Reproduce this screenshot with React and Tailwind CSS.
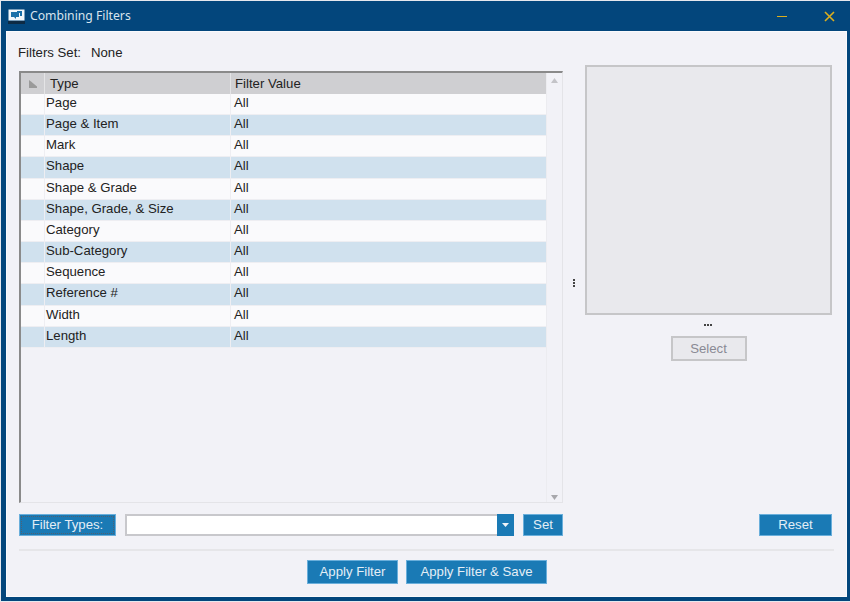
const rows = [
  "Page",
  "Page & Item",
  "Mark",
  "Shape",
  "Shape & Grade",
  "Shape, Grade, & Size",
  "Category",
  "Sub-Category",
  "Sequence",
  "Reference #",
  "Width",
  "Length",
];

function BlueButton({ className = "", children }) {
  return (
    <button className={`h-full bg-[#1a7ab5] border border-[#6aafdb] text-[#e4eef5] text-[13.2px] leading-none ${className}`}>
      {children}
    </button>
  );
}

function Dots({ vertical }) {
  return (
    <div className={`flex gap-[1px] ${vertical ? "flex-col" : ""}`}>
      <span className="w-[2px] h-[2px] bg-[#444]" />
      <span className="w-[2px] h-[2px] bg-[#444]" />
      <span className="w-[2px] h-[2px] bg-[#444]" />
    </div>
  );
}

function FilterTable() {
  return (
    <div className="w-[544px] h-[432px] shrink-0 flex border-t-2 border-l-2 border-t-[#8a8a8a] border-l-[#8a8a8a] border-b border-r border-b-[#e4e4e8] border-r-[#e4e4e8]">
      <div className="w-[525px] flex flex-col">
        <div className="h-[21px] flex bg-[#cfcfd2] text-[#222] text-[13.2px] leading-[21px]">
          <div className="w-[24px] border-r border-[#e4e4e6] flex items-center justify-center">
            <svg width="9" height="8" viewBox="0 0 9 8">
              <path d="M1 0v8h8V6.5L3 1.5z" fill="#9a9a9a" />
            </svg>
          </div>
          <div className="w-[186px] pl-[5px] border-r border-[#e4e4e6]">Type</div>
          <div className="flex-1 pl-[4px]">Filter Value</div>
        </div>
        <div className="h-[254px] grid auto-rows-fr">
          {rows.map((name, i) => (
            <div
              key={name}
              className={`flex border-b border-[#eeeef2] text-[13.2px] leading-[16px] text-[#222] ${i % 2 === 0 ? "bg-[#fafafc]" : "bg-[#d0e1ee]"}`}
            >
              <div className="w-[24px] border-r border-[#eeeef2]" />
              <div className="w-[186px] pl-[1px] pt-[1px] border-r border-[#eeeef2]">{name}</div>
              <div className="flex-1 pl-[3px] pt-[1px]">All</div>
            </div>
          ))}
        </div>
      </div>
      <div className="flex-1 flex flex-col items-center justify-between pt-[5px] pb-[2px] border-l border-[#ececf0]">
        <svg width="7" height="5" viewBox="0 0 7 5"><path d="M3.5 0 7 5H0z" fill="#c4c4c8" /></svg>
        <svg width="7" height="5" viewBox="0 0 7 5"><path d="M0 0h7L3.5 5z" fill="#a8a8ac" /></svg>
      </div>
    </div>
  );
}

export default function App() {
  return (
    <div
      className="w-[850px] h-[602px] flex bg-[#e6e8ee] pt-[1px] pl-[1px] pb-[1px]"
      style={{ fontFamily: "'Liberation Sans', Arial, sans-serif" }}
    >
      <div className="flex-1 flex flex-col bg-[#03467c] pr-[3px] pb-[4px]">
        <div className="h-[30px] flex items-center shrink-0 pl-[7px]">
          <svg width="17" height="15" viewBox="0 0 17 15" className="mr-[5px]">
            <rect x="0.5" y="0.5" width="16" height="11" fill="#f2f6fa" />
            <rect x="0" y="12" width="17" height="3" fill="#0d2a44" />
            <path d="M3 3h8v5H8v2L6 8H3z" fill="#1a6fa8" />
            <path d="M9 2h5v5h-2V4H9z" fill="#1a6fa8" />
          </svg>
          <span className="text-[12.2px] text-[#d8e4ee]" style={{ fontFamily: "'Noto Sans', sans-serif" }}>
            Combining Filters
          </span>
          <div className="ml-auto flex items-center">
            <div className="w-[10px] h-[1.5px] bg-[#dcae1d] mr-[37px] mt-[1px]" />
            <svg width="11" height="11" viewBox="0 0 11 11" className="mr-[12px]">
              <path d="M1 1l9 9M10 1l-9 9" stroke="#dcae1d" strokeWidth="1.6" fill="none" />
            </svg>
          </div>
        </div>

        <div className="flex-1 ml-[5px] bg-[#f2f2f7] border border-[#fafafc] pl-[12px] pr-[14px] flex flex-col min-h-0">
          <div className="h-[39px] flex items-end pb-[12px] text-[13.2px] leading-none text-[#222] shrink-0 -ml-[1px]">
            <span className="w-[73px]">Filters Set:</span>
            <span>None</span>
          </div>

          <div className="flex h-[465px] shrink-0">
            <div className="w-[544px] flex flex-col">
              <FilterTable />
              <div className="h-[22px] mt-[11px] flex">
                <BlueButton className="w-[97px] outline-1 outline-dotted outline-[#4f6172] -outline-offset-3">
                  Filter Types:
                </BlueButton>
                <div className="w-[389px] ml-[9px] flex bg-white border-2 border-[#c8c8cc]">
                  <div className="ml-auto w-[17px] -mr-[2px] -my-[2px] bg-[#1a7ab5] flex items-center justify-center">
                    <svg width="7" height="4" viewBox="0 0 7 4"><path d="M0 0h7L3.5 4z" fill="#f0f4f8" /></svg>
                  </div>
                </div>
                <BlueButton className="w-[40px] ml-[9px]">Set</BlueButton>
              </div>
            </div>

            <div className="w-[22px] flex items-center justify-center pb-[41px]">
              <Dots vertical />
            </div>

            <div className="flex-1 flex flex-col -mt-[6px]">
              <div className="w-[247px] h-[250px] bg-[#e9e9ed] border-2 border-[#c6c6c8]" />
              <div className="w-[247px] flex justify-center mt-[9px] pr-[1px]">
                <Dots />
              </div>
              <div className="w-[247px] flex justify-center mt-[10px]">
                <button className="w-[76px] h-[25px] bg-[#e9e9ed] border-2 border-[#c6c6c8] text-[13.2px] leading-none text-[#8a8a94]">
                  Select
                </button>
              </div>
              <div className="mt-auto h-[22px] flex justify-end w-[247px]">
                <BlueButton className="w-[73px]">Reset</BlueButton>
              </div>
            </div>
          </div>

          <div className="h-[2px] bg-[#e6e6e9] mt-[13px] -mr-[2px] shrink-0" />
          <div className="h-[45px] flex justify-center items-start pt-[9px] gap-[8px] pl-[3px] shrink-0">
            <BlueButton className="w-[91px] !h-[24px]">Apply Filter</BlueButton>
            <BlueButton className="w-[141px] !h-[24px]">Apply Filter &amp; Save</BlueButton>
          </div>
        </div>
      </div>
    </div>
  );
}
